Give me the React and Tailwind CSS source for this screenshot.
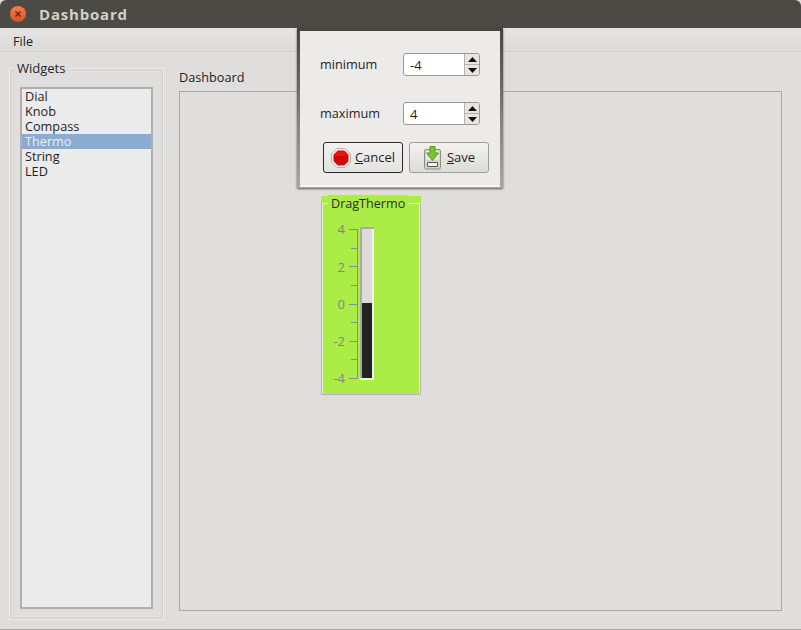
import React from 'react';

const UI = "font-['Open_Sans','Noto_Sans',sans-serif]";

const CloseButton = () => (
  <div className="w-[16px] h-[16px] rounded-full bg-gradient-to-b from-[#f0814f] to-[#dc4f1e] flex items-center justify-center">
    <svg width="8" height="8" viewBox="0 0 8 8">
      <path d="M1.5 1.5 L6.5 6.5 M6.5 1.5 L1.5 6.5" stroke="#5a2410" strokeWidth="1.2" />
    </svg>
  </div>
);

const SpinBox = ({ value }) => (
  <div className="w-[77px] h-[23px] flex rounded-[3px] border border-[#9b9993] bg-white overflow-hidden">
    <div className="flex-1 pl-[6px] text-[13px] leading-[22px] text-[#1c1c1c]">{value}</div>
    <div className="w-[15px] flex flex-col border-l border-[#b5b3ae] bg-[#e6e5e2]">
      <div className="flex-1 flex items-center justify-center border-b border-[#b5b3ae]">
        <svg width="9" height="5" viewBox="0 0 9 5"><path d="M4.5 0 L9 5 L0 5 Z" fill="#111" /></svg>
      </div>
      <div className="flex-1 flex items-center justify-center">
        <svg width="9" height="5" viewBox="0 0 9 5"><path d="M0 0 L9 0 L4.5 5 Z" fill="#111" /></svg>
      </div>
    </div>
  </div>
);

const StopIcon = () => (
  <svg width="20" height="20" viewBox="0 0 20 20">
    <path d="M6 0.5 H14 L19.5 6 V14 L14 19.5 H6 L0.5 14 V6 Z" fill="#f2f1ef" stroke="#b3b1ad" />
    <path d="M6.8 2.5 H13.2 L17.5 6.8 V13.2 L13.2 17.5 H6.8 L2.5 13.2 V6.8 Z" fill="#d60606" />
    <path d="M7 3.5 H13 L16 6.5 L16 8 H4 L4 6.5 Z" fill="#e83030" opacity="0.45" />
  </svg>
);

const SaveIcon = () => (
  <svg width="19" height="24" viewBox="0 0 19 24">
    <rect x="1.5" y="3.5" width="16" height="19.5" rx="1.5" fill="#d3d4ca" stroke="#8d8e84" />
    <rect x="3" y="5" width="13" height="9" fill="#e9eae1" />
    <rect x="4.5" y="16.5" width="10" height="4" rx="0.5" fill="#f4f4f0" stroke="#55564f" />
    <path d="M7 0.5 H12 V7 H15.5 L9.5 14.5 L3.5 7 H7 Z" fill="#7cc52f" stroke="#559a1a" />
  </svg>
);

const Thermo = () => {
  const major = [[229, '4'], [266.5, '2'], [304, '0'], [341, '-2'], [378, '-4']];
  const minor = [248, 285, 322, 359];
  return (
    <div className="absolute left-[321px] top-[195px] w-[100px] h-[200px]">
      <div className="absolute left-0 right-0 top-[1px] h-[8px] bg-[#abec47]" />
      <div className="absolute left-0 right-0 top-[8px] bottom-0 border border-t-0 border-[#b4b7ab] bg-[#abec47]" />
      <div className="absolute left-[1px] right-[1px] top-[8px] bottom-[1px] border border-b-0 border-[#e9efdc] border-r-[#e9efdc]" />
      <div className="absolute left-[7px] top-0 px-[3px] bg-[#abec47] text-[12.6px] leading-[17px] text-[#2c2c22]">DragThermo</div>
      <svg className="absolute left-0 top-0" width="100" height="200" viewBox="321 195 100 200">
        <path d="M357.5 229 V378.5" stroke="#8a8894" fill="none" />
        {major.map(([y]) => (
          <path key={y} d={`M349 ${Math.floor(y) + 0.5} H357`} stroke="#8a8894" />
        ))}
        {minor.map((y) => (
          <path key={y} d={`M351 ${y + 0.5} H357`} stroke="#8a8894" />
        ))}
        {major.map(([y, label]) => (
          <text key={label} x="345" y={y + 5} textAnchor="end" fontSize="13" fill="#86857f" fontFamily="Open Sans, sans-serif">{label}</text>
        ))}
        <rect x="360" y="227" width="14" height="153" fill="#f0f0ee" />
        <path d="M360 227 H374 V229 H362 V378 H360 Z" fill="#a9a9a7" />
        <rect x="362" y="229" width="10" height="74" fill="#dcdbd9" />
        <rect x="362" y="303" width="10" height="75" fill="#222222" />
      </svg>
    </div>
  );
};

const Dialog = () => (
  <div className="absolute left-[297px] top-[28px] w-[206px] h-[160px] bg-gradient-to-b from-[#45443f] via-[#85847f] via-60% to-[#a8a7a3] shadow-[0_1px_2px_rgba(0,0,0,0.6)] pt-[3px] px-[3px] pb-[1px]">
    <div className="h-full bg-[#ecebe9] border-b-2 border-[#f6f6f4] pl-[20px] flex flex-col">
      <div className="mt-[22px] h-[23px] flex items-center justify-between pr-[20px]">
        <span className="text-[12.7px] text-[#1f1f1f]">minimum</span>
        <SpinBox value="-4" />
      </div>
      <div className="mt-[26px] h-[23px] flex items-center justify-between pr-[20px]">
        <span className="text-[12.7px] text-[#1f1f1f]">maximum</span>
        <SpinBox value="4" />
      </div>
      <div className="mt-[17px] ml-[3px] flex gap-[6px]">
        <button className="w-[80px] h-[31px] rounded-[3px] border border-[#2b2b2b] bg-gradient-to-b from-[#f3f2f0] to-[#e3e2df] flex items-center justify-center gap-[4px] text-[13px] text-[#1f1f1f]">
          <StopIcon />
          <span><span className="underline">C</span>ancel</span>
        </button>
        <button className="w-[80px] h-[31px] rounded-[3px] border border-[#a09e9a] bg-gradient-to-b from-[#f3f2f0] to-[#dcdbd8] flex items-center justify-center gap-[5px] text-[13px] text-[#1f1f1f]">
          <SaveIcon />
          <span><span className="underline">S</span>ave</span>
        </button>
      </div>
    </div>
  </div>
);

export default function App() {
  const items = ['Dial', 'Knob', 'Compass', 'Thermo', 'String', 'LED'];
  return (
    <div className={`relative w-[801px] h-[630px] overflow-hidden bg-[#dfdedc] flex flex-col ${UI}`}>
      {/* title bar */}
      <div className="h-[28px] shrink-0 bg-[#4b4a44] rounded-t-[6px] flex items-center pl-[10px] gap-[13px] pb-[1px]">
        <CloseButton />
        <span className="text-[15px] leading-[20px] font-bold tracking-[0.8px] text-[#d3d0c8]">Dashboard</span>
      </div>
      {/* menu */}
      <div className="h-[24px] shrink-0 bg-gradient-to-b from-[#e6e5e3] to-[#dbdad8] border-b border-[#cfcecb] pl-[13px] text-[12.7px] leading-[27px] text-[#1f1f1f]">File</div>
      {/* content */}
      <div className="flex-1 flex pl-[9px] pr-[19px] pt-[16px] gap-[15px] border-b border-[#a8a7a4]">
        <div className="relative w-[155px] h-[552px] border border-[#eeedeb] outline outline-1 -outline-offset-2 outline-[#d2d1ce] px-[10px] pt-[18px] pb-[10px] flex">
          <span className="absolute left-[4px] -top-[9px] px-[3px] bg-[#dfdedc] text-[13px] leading-[16px] text-[#1f1f1f]">Widgets</span>
          <div className="flex-1 border-2 border-[#b0afac] bg-[#ebebeb]">
            {items.map((item) => (
              <div key={item} className={`h-[15px] pl-[3px] text-[12.7px] leading-[15px] ${item === 'Thermo' ? 'bg-[#8cabd0] text-[#e8eef5]' : 'text-[#1f1f1f]'}`}>{item}</div>
            ))}
          </div>
        </div>
        <div className="flex-1 flex flex-col">
          <div className="h-[23px] text-[12.7px] leading-[18px] text-[#1f1f1f]">Dashboard</div>
          <div className="w-[603px] h-[520px] border border-[#a9a8a5]" />
        </div>
      </div>
      <Thermo />
      <Dialog />
    </div>
  );
}
